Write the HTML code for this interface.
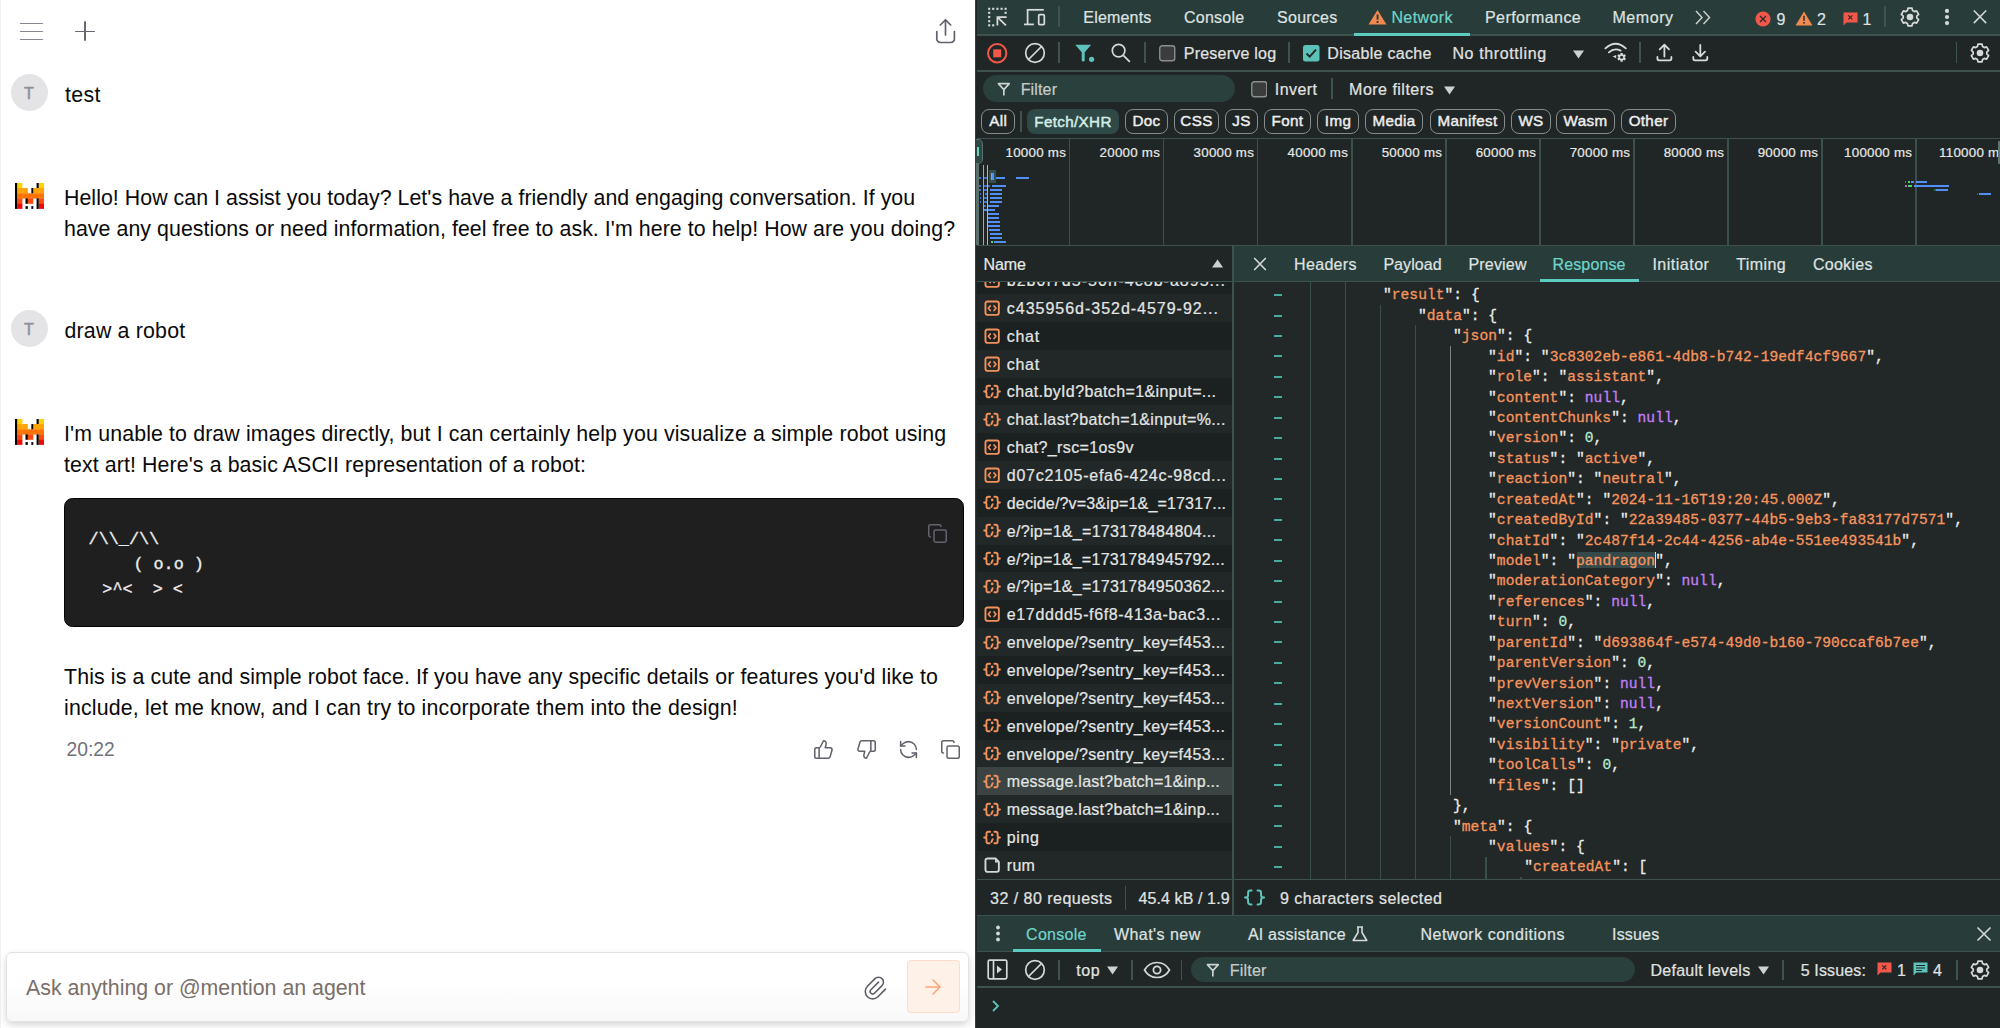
<!DOCTYPE html>
<html><head><meta charset="utf-8"><style>
html,body{margin:0;padding:0;width:2000px;height:1028px;overflow:hidden;background:#fff}
body{position:relative;font-family:"Liberation Sans",sans-serif}
.ab{position:absolute}
.t{white-space:pre}
.dk{-webkit-text-stroke:0.22px currentColor}
.j{white-space:pre;font-family:"Liberation Mono",monospace;font-size:14.58px;line-height:21px;letter-spacing:0.045px;-webkit-text-stroke:0.25px currentColor}
.j span{-webkit-text-stroke:0.3px}
</style></head><body>
<div class="ab" style="left:0;top:0;width:975px;height:1028px;background:#fff"></div>
<div class="ab" style="left:0;top:0;width:1px;height:1028px;background:#f1f1f1"></div>
<div class="ab" style="left:20.4px;top:22.7px;width:22.8px;height:1.7px;border-radius:1px;background:#858591"></div>
<div class="ab" style="left:20.4px;top:30.7px;width:22.8px;height:1.7px;border-radius:1px;background:#858591"></div>
<div class="ab" style="left:20.4px;top:38.7px;width:22.8px;height:1.7px;border-radius:1px;background:#858591"></div>
<div class="ab" style="left:74.7px;top:30.5px;width:20.4px;height:1.9px;border-radius:1px;background:#666671"></div>
<div class="ab" style="left:83.9px;top:21.2px;width:1.9px;height:20.3px;border-radius:1px;background:#666671"></div>
<svg class="ab" style="left:930px;top:14px" width="32" height="34" viewBox="0 0 32 34" fill="none" stroke="#62626e" stroke-width="1.7" stroke-linecap="round" stroke-linejoin="round"><path d="M15.5 6v15"/><path d="M10.3 11 15.5 5.8 20.7 11"/><path d="M6.8 17.5v7.5a3.5 3.5 0 0 0 3.5 3.5h10.6a3.5 3.5 0 0 0 3.5-3.5v-7.5"/></svg>
<div class="ab" style="left:10.8px;top:74.0px;width:37px;height:37px;border-radius:50%;background:#e4e4e7"></div>
<div class="ab t" style="left:10.5px;top:82.80px;line-height:21px;font-size:16px;color:#8f8f99;width:37px;text-align:center;-webkit-text-stroke:0.55px currentColor">T</div>
<div class="ab" style="left:10.8px;top:310.0px;width:37px;height:37px;border-radius:50%;background:#e4e4e7"></div>
<div class="ab t" style="left:10.5px;top:318.80px;line-height:21px;font-size:16px;color:#8f8f99;width:37px;text-align:center;-webkit-text-stroke:0.55px currentColor">T</div>
<div class="ab t" style="left:65px;top:78.50px;line-height:32px;font-size:21.33px;color:#0a0a0a;letter-spacing:0.35px">test</div>
<div class="ab t" style="left:64.5px;top:314.50px;line-height:32px;font-size:21.33px;color:#0a0a0a;letter-spacing:0.19px">draw a robot</div>
<svg class="ab" style="left:14.6px;top:183px" width="29.2" height="25.9" viewBox="0 0 29.2 25.9" shape-rendering="geometricPrecision"><rect x="2.15" y="0.00" width="5.25" height="5.31" fill="#ffd000"/><rect x="23.75" y="0.00" width="5.45" height="5.31" fill="#ffd000"/><rect x="2.15" y="5.06" width="5.25" height="5.49" fill="#ffa300"/><rect x="23.75" y="5.06" width="5.45" height="5.49" fill="#ffa300"/><rect x="2.15" y="10.30" width="5.25" height="5.30" fill="#ff7300"/><rect x="23.75" y="10.30" width="5.45" height="5.30" fill="#ff7300"/><rect x="2.15" y="15.35" width="5.25" height="5.70" fill="#fc4a10"/><rect x="23.75" y="15.35" width="5.45" height="5.70" fill="#fc4a10"/><rect x="2.15" y="20.80" width="5.25" height="5.10" fill="#ee0a05"/><rect x="23.75" y="20.80" width="5.45" height="5.10" fill="#ee0a05"/><rect x="7.20" y="5.06" width="5.65" height="5.49" fill="#ffa300"/><rect x="18.30" y="5.06" width="5.65" height="5.49" fill="#ffa300"/><rect x="7.20" y="10.30" width="16.75" height="5.30" fill="#ff7300"/><rect x="12.85" y="15.35" width="5.45" height="5.45" fill="#fc4a10"/><rect x="0.00" y="0.00" width="2.15" height="25.90" fill="#000"/><rect x="21.60" y="0.00" width="2.15" height="5.06" fill="#000"/><rect x="16.36" y="5.06" width="1.94" height="5.24" fill="#000"/><rect x="10.50" y="15.35" width="2.35" height="5.45" fill="#000"/><rect x="21.60" y="15.35" width="2.15" height="10.55" fill="#000"/><rect x="10.50" y="23.10" width="2.35" height="2.80" fill="#000"/><rect x="16.36" y="23.10" width="1.94" height="2.80" fill="#000"/></svg>
<svg class="ab" style="left:14.6px;top:419px" width="29.2" height="25.9" viewBox="0 0 29.2 25.9" shape-rendering="geometricPrecision"><rect x="2.15" y="0.00" width="5.25" height="5.31" fill="#ffd000"/><rect x="23.75" y="0.00" width="5.45" height="5.31" fill="#ffd000"/><rect x="2.15" y="5.06" width="5.25" height="5.49" fill="#ffa300"/><rect x="23.75" y="5.06" width="5.45" height="5.49" fill="#ffa300"/><rect x="2.15" y="10.30" width="5.25" height="5.30" fill="#ff7300"/><rect x="23.75" y="10.30" width="5.45" height="5.30" fill="#ff7300"/><rect x="2.15" y="15.35" width="5.25" height="5.70" fill="#fc4a10"/><rect x="23.75" y="15.35" width="5.45" height="5.70" fill="#fc4a10"/><rect x="2.15" y="20.80" width="5.25" height="5.10" fill="#ee0a05"/><rect x="23.75" y="20.80" width="5.45" height="5.10" fill="#ee0a05"/><rect x="7.20" y="5.06" width="5.65" height="5.49" fill="#ffa300"/><rect x="18.30" y="5.06" width="5.65" height="5.49" fill="#ffa300"/><rect x="7.20" y="10.30" width="16.75" height="5.30" fill="#ff7300"/><rect x="12.85" y="15.35" width="5.45" height="5.45" fill="#fc4a10"/><rect x="0.00" y="0.00" width="2.15" height="25.90" fill="#000"/><rect x="21.60" y="0.00" width="2.15" height="5.06" fill="#000"/><rect x="16.36" y="5.06" width="1.94" height="5.24" fill="#000"/><rect x="10.50" y="15.35" width="2.35" height="5.45" fill="#000"/><rect x="21.60" y="15.35" width="2.15" height="10.55" fill="#000"/><rect x="10.50" y="23.10" width="2.35" height="2.80" fill="#000"/><rect x="16.36" y="23.10" width="1.94" height="2.80" fill="#000"/></svg>
<div class="ab t" style="left:64px;top:181.50px;line-height:32px;font-size:21.33px;color:#0a0a0a;letter-spacing:0.046px">Hello! How can I assist you today? Let's have a friendly and engaging conversation. If you</div>
<div class="ab t" style="left:64px;top:213.00px;line-height:32px;font-size:21.33px;color:#0a0a0a;letter-spacing:0.065px">have any questions or need information, feel free to ask. I'm here to help! How are you doing?</div>
<div class="ab t" style="left:64px;top:417.50px;line-height:32px;font-size:21.33px;color:#0a0a0a;letter-spacing:0.127px">I'm unable to draw images directly, but I can certainly help you visualize a simple robot using</div>
<div class="ab t" style="left:64px;top:449.00px;line-height:32px;font-size:21.33px;color:#0a0a0a;letter-spacing:0.101px">text art! Here's a basic ASCII representation of a robot:</div>
<div class="ab" style="left:64px;top:498.4px;width:900px;height:129px;border-radius:8.5px;background:#1f1f1f;border:1.2px solid #050505;box-sizing:border-box"></div>
<div class="ab t" style="left:88.6px;top:526.50px;line-height:25px;font-size:16.8px;color:#ececec;font-family:'Liberation Mono',monospace;-webkit-text-stroke:0.35px currentColor">/\\_/\\</div>
<div class="ab t" style="left:93.1px;top:551.50px;line-height:25px;font-size:16.8px;color:#ececec;font-family:'Liberation Mono',monospace;-webkit-text-stroke:0.35px currentColor">    ( o.o )</div>
<div class="ab t" style="left:92.3px;top:577.00px;line-height:25px;font-size:16.8px;color:#ececec;font-family:'Liberation Mono',monospace;-webkit-text-stroke:0.35px currentColor"> &gt;^&lt;  &gt; &lt;</div>
<svg class="ab" style="left:926.8px;top:523px" width="21" height="21" viewBox="0 0 24 24" fill="none" stroke="#64646f" stroke-width="1.7" stroke-linecap="round" stroke-linejoin="round"><rect width="14" height="14" x="8" y="8" rx="2" ry="2"/><path d="M4 16c-1.1 0-2-.9-2-2V4c0-1.1.9-2 2-2h10c1.1 0 2 .9 2 2"/></svg>
<div class="ab t" style="left:64px;top:660.50px;line-height:32px;font-size:21.33px;color:#0a0a0a;letter-spacing:0.122px">This is a cute and simple robot face. If you have any specific details or features you'd like to</div>
<div class="ab t" style="left:64px;top:692.00px;line-height:32px;font-size:21.33px;color:#0a0a0a;letter-spacing:0.172px">include, let me know, and I can try to incorporate them into the design!</div>
<div class="ab t" style="left:66.5px;top:736.00px;line-height:28px;font-size:19.3px;color:#71717a;">20:22</div>
<svg class="ab" style="left:812.9px;top:739.1px" width="21" height="21" viewBox="0 0 24 24" fill="none" stroke="#62626e" stroke-width="1.75" stroke-linecap="round" stroke-linejoin="round"><path d="M7 10v12"/><path d="M15 5.88 14 10h5.83a2 2 0 0 1 1.92 2.56l-2.33 8A2 2 0 0 1 17.5 22H4a2 2 0 0 1-2-2v-8a2 2 0 0 1 2-2h2.76a2 2 0 0 0 1.79-1.11L12 2a3.13 3.13 0 0 1 3 3.88Z"/></svg>
<svg class="ab" style="left:855.5px;top:739.1px" width="21" height="21" viewBox="0 0 24 24" fill="none" stroke="#62626e" stroke-width="1.75" stroke-linecap="round" stroke-linejoin="round"><path d="M17 14V2"/><path d="M9 18.12 10 14H4.17a2 2 0 0 1-1.92-2.56l2.33-8A2 2 0 0 1 6.5 2H20a2 2 0 0 1 2 2v8a2 2 0 0 1-2 2h-2.76a2 2 0 0 0-1.79 1.11L12 22a3.13 3.13 0 0 1-3-3.88Z"/></svg>
<svg class="ab" style="left:898.0px;top:739.1px" width="21" height="21" viewBox="0 0 24 24" fill="none" stroke="#62626e" stroke-width="1.75" stroke-linecap="round" stroke-linejoin="round"><path d="M21 12a9 9 0 0 0-9-9 9.75 9.75 0 0 0-6.74 2.74L3 8"/><path d="M3 3v5h5"/><path d="M3 12a9 9 0 0 0 9 9 9.75 9.75 0 0 0 6.74-2.74L21 16"/><path d="M16 16h5v5"/></svg>
<svg class="ab" style="left:940.0px;top:739.1px" width="21" height="21" viewBox="0 0 24 24" fill="none" stroke="#62626e" stroke-width="1.75" stroke-linecap="round" stroke-linejoin="round"><rect width="14" height="14" x="8" y="8" rx="2" ry="2"/><path d="M4 16c-1.1 0-2-.9-2-2V4c0-1.1.9-2 2-2h10c1.1 0 2 .9 2 2"/></svg>
<div class="ab" style="left:5.5px;top:951.5px;width:963px;height:70px;border-radius:6px;border:1px solid #e2e2e2;box-sizing:border-box;background:linear-gradient(#fff 40%,#f8f8f8);box-shadow:0 3px 7px rgba(0,0,0,0.16)"></div>
<div class="ab t" style="left:26px;top:971.50px;line-height:32px;font-size:21.33px;color:#7a6f69;">Ask anything or @mention an agent</div>
<svg class="ab" style="left:861px;top:974px" width="28" height="28" viewBox="0 0 24 24" fill="none" stroke="#5c5c67" stroke-width="1.35" stroke-linecap="round" stroke-linejoin="round"><path d="M15 7l-6.5 6.5a1.5 1.5 0 0 0 3 3l6.5 -6.5a3 3 0 0 0 -6 -6l-6.5 6.5a4.5 4.5 0 0 0 9 9l6.5 -6.5"/></svg>
<div class="ab" style="left:907.3px;top:960.2px;width:52.3px;height:52.4px;border-radius:3.5px;border:1.2px solid #fcdcc6;box-sizing:border-box;background:#fef1e8"></div>
<svg class="ab" style="left:921.3px;top:975.3px" width="24" height="24" viewBox="0 0 24 24" fill="none" stroke="#fba477" stroke-width="1.45" stroke-linecap="round" stroke-linejoin="round"><path d="M5 12h14"/><path d="m12 5 7 7-7 7"/></svg>
<div class="ab" style="left:975px;top:0px;width:1025px;height:1028px;background:#202525;"></div>
<div class="ab" style="left:974.6px;top:0px;width:1.8px;height:1028px;background:#2c4340;"></div>
<div class="ab" style="left:976.7px;top:0px;width:1023.3px;height:34.5px;background:#283c3a;"></div>
<div class="ab" style="left:976.7px;top:34.3px;width:1023.3px;height:1.4px;background:#3b524f;"></div>
<svg class="ab" style="left:980px;top:2px;" width="80" height="30" viewBox="0 0 80 30"><rect x="8.15" y="5.75" width="2.1" height="2.1" fill="#d8dcda"/><rect x="12.15" y="5.75" width="2.1" height="2.1" fill="#d8dcda"/><rect x="16.35" y="5.75" width="2.1" height="2.1" fill="#d8dcda"/><rect x="20.55" y="5.75" width="2.1" height="2.1" fill="#d8dcda"/><rect x="24.55" y="5.75" width="2.1" height="2.1" fill="#d8dcda"/><rect x="8.15" y="9.75" width="2.1" height="2.1" fill="#d8dcda"/><rect x="8.15" y="13.95" width="2.1" height="2.1" fill="#d8dcda"/><rect x="8.15" y="18.15" width="2.1" height="2.1" fill="#d8dcda"/><rect x="8.15" y="22.25" width="2.1" height="2.1" fill="#d8dcda"/><rect x="12.15" y="22.25" width="2.1" height="2.1" fill="#d8dcda"/><rect x="24.55" y="9.75" width="2.1" height="2.1" fill="#d8dcda"/><g fill="none" stroke="#d8dcda" stroke-width="1.75"><path d="M17.4 23.6V15.1H26.6"/><path d="M18 15.7 25.9 23.4"/><path d="M47.6 7.8H63.8"/><path d="M47.6 7V22.3"/><path d="M44 22.4H53.9"/><rect x="58.7" y="12.7" width="5.6" height="9.8" rx="1"/></g></svg>
<div class="ab" style="left:1058.4px;top:6px;width:1.3px;height:21px;background:#3d5552;"></div>
<div class="ab t dk" style="letter-spacing:0.185px;left:1083.3px;top:7.40px;line-height:22px;font-size:16px;color:#dfe2e0;">Elements</div>
<div class="ab t dk" style="letter-spacing:0.216px;left:1184.1px;top:7.40px;line-height:22px;font-size:16px;color:#dfe2e0;">Console</div>
<div class="ab t dk" style="letter-spacing:0.233px;left:1277.1px;top:7.40px;line-height:22px;font-size:16px;color:#dfe2e0;">Sources</div>
<div class="ab t dk" style="letter-spacing:0.411px;left:1485px;top:7.40px;line-height:22px;font-size:16px;color:#dfe2e0;">Performance</div>
<div class="ab t dk" style="letter-spacing:0.544px;left:1612.5px;top:7.40px;line-height:22px;font-size:16px;color:#dfe2e0;">Memory</div>
<svg class="ab" style="left:1368px;top:9px;" width="19" height="16" viewBox="0 0 19 16"><path d="M9.5 1 18.5 15.5H0.5Z" fill="#f2894f"/><rect x="8.6" y="5.5" width="1.9" height="5.2" fill="#283c3a"/><rect x="8.6" y="12" width="1.9" height="1.9" fill="#283c3a"/></svg>
<div class="ab t dk" style="letter-spacing:0.419px;left:1391.4px;top:7.40px;line-height:22px;font-size:16px;color:#6fd5ca;">Network</div>
<div class="ab" style="left:1354px;top:32.5px;width:116px;height:3px;background:#5ccbc0;"></div>
<svg class="ab" style="left:1694px;top:9px;" width="19" height="17" viewBox="0 0 19 17"><path d="M2 2l6 6.5-6 6.5M9.5 2l6 6.5-6 6.5" fill="none" stroke="#c9cecb" stroke-width="1.5"/></svg>
<svg class="ab" style="left:1754.5px;top:10.5px;" width="16" height="16" viewBox="0 0 16 16"><circle cx="8" cy="8" r="7.6" fill="#f1584a"/><path d="M5 5l6 6M11 5l-6 6" stroke="#2a2a2a" stroke-width="1.3"/></svg>
<div class="ab t dk" style="left:1776.5px;top:8.60px;line-height:22px;font-size:16px;color:#dfe2e0;letter-spacing:0.35px;">9</div>
<svg class="ab" style="left:1795px;top:10.5px;" width="18" height="15" viewBox="0 0 18 15"><path d="M9 0.5 17.5 14.5H0.5Z" fill="#f2894f"/><rect x="8.2" y="4.8" width="1.6" height="5" fill="#283c3a"/><rect x="8.2" y="11" width="1.6" height="1.7" fill="#283c3a"/></svg>
<div class="ab t dk" style="left:1817px;top:8.60px;line-height:22px;font-size:16px;color:#dfe2e0;letter-spacing:0.35px;">2</div>
<svg class="ab" style="left:1842.5px;top:11.5px;" width="15" height="14" viewBox="0 0 15 14"><path d="M0.5 0.5h14v10h-11l-3 3Z" fill="#f1584a"/><path d="M5.3 3.3l4 4M9.3 3.3l-4 4" stroke="#2a2a2a" stroke-width="1.2"/></svg>
<div class="ab t dk" style="left:1862.5px;top:8.60px;line-height:22px;font-size:16px;color:#dfe2e0;letter-spacing:0.35px;">1</div>
<div class="ab" style="left:1884.4px;top:6px;width:1.3px;height:21px;background:#3d5552;"></div>
<svg class="ab" style="left:1900px;top:7px;" width="20" height="20" viewBox="0 0 20 20"><path d="M12.02 1.23 L7.98 1.23 L7.42 3.60 L5.75 4.56 L3.42 3.86 L1.39 7.37 L3.17 9.04 L3.17 10.96 L1.39 12.63 L3.42 16.14 L5.75 15.44 L7.42 16.40 L7.98 18.77 L12.02 18.77 L12.58 16.40 L14.25 15.44 L16.58 16.14 L18.61 12.63 L16.83 10.96 L16.83 9.04 L18.61 7.37 L16.58 3.86 L14.25 4.56 L12.58 3.60Z" fill="none" stroke="#d5d9d7" stroke-width="1.75" stroke-linejoin="round"/><circle cx="10" cy="10" r="3.3" fill="#d5d9d7"/></svg>
<svg class="ab" style="left:1944px;top:8px;" width="6" height="18" viewBox="0 0 6 18"><circle cx="3" cy="2.9" r="2.1" fill="#d5d9d7"/><circle cx="3" cy="9" r="2.1" fill="#d5d9d7"/><circle cx="3" cy="15.1" r="2.1" fill="#d5d9d7"/></svg>
<svg class="ab" style="left:1972px;top:9.2px;" width="16" height="16" viewBox="0 0 16 16"><path d="M1.8 1.5l12.4 12.6M14.2 1.5l-12.4 12.6" stroke="#d5d9d7" stroke-width="1.5"/></svg>
<div class="ab" style="left:976.7px;top:35.7px;width:1023.3px;height:35px;background:#202525;"></div>
<div class="ab" style="left:976.7px;top:70.4px;width:1023.3px;height:1.3px;background:#3b524f;"></div>
<svg class="ab" style="left:986px;top:42px;" width="22" height="22" viewBox="0 0 22 22"><circle cx="11.2" cy="11.3" r="9.2" fill="none" stroke="#f1584a" stroke-width="2"/><rect x="7.2" y="7.3" width="8" height="8" fill="#f1584a"/></svg>
<svg class="ab" style="left:1023.5px;top:42px;" width="22" height="22" viewBox="0 0 22 22"><circle cx="11" cy="11" r="9.3" fill="none" stroke="#d5d9d7" stroke-width="1.7"/><path d="M4.5 17.5l13-13" stroke="#d5d9d7" stroke-width="1.7"/></svg>
<div class="ab" style="left:1058.4px;top:42px;width:1.3px;height:21px;background:#3d5552;"></div>
<svg class="ab" style="left:1074px;top:44px;" width="22" height="20" viewBox="0 0 22 20"><path d="M1.2 0.8h16L10.7 8.3V16.4Q10.7 17.4 9.2 17.4Q7.7 17.4 7.7 16.4V8.3Z" fill="#5cc4bb"/><circle cx="17.6" cy="15.3" r="2.6" fill="#5cc4bb"/></svg>
<svg class="ab" style="left:1110px;top:42px;" width="22" height="22" viewBox="0 0 22 22"><circle cx="8.6" cy="8.6" r="6.3" fill="none" stroke="#d5d9d7" stroke-width="1.7"/><path d="M13.3 13.3l6.5 6.5" stroke="#d5d9d7" stroke-width="1.8"/></svg>
<div class="ab" style="left:1144.4px;top:42px;width:1.3px;height:21px;background:#3d5552;"></div>
<svg class="ab" style="left:1159px;top:45px;" width="16.5" height="16.5" viewBox="0 0 16.5 16.5"><rect x="0.75" y="0.75" width="15" height="15" rx="2.5" fill="#3b3d3d" stroke="#8c8f8e" stroke-width="1.4"/></svg>
<div class="ab t dk" style="letter-spacing:0.225px;left:1183.8px;top:43.40px;line-height:22px;font-size:16px;color:#e0e3e1;">Preserve log</div>
<div class="ab" style="left:1288.4px;top:42px;width:1.3px;height:21px;background:#3d5552;"></div>
<svg class="ab" style="left:1303px;top:45px;" width="16.5" height="16.5" viewBox="0 0 16.5 16.5"><rect x="0" y="0" width="16.5" height="16.5" rx="2.5" fill="#5bc2b8"/><path d="M3.5 8.5l3.2 3.2 6.3-7" fill="none" stroke="#262626" stroke-width="1.9"/></svg>
<div class="ab t dk" style="letter-spacing:0.292px;left:1327.3px;top:43.40px;line-height:22px;font-size:16px;color:#e0e3e1;">Disable cache</div>
<div class="ab t dk" style="letter-spacing:0.620px;left:1452.4px;top:43.40px;line-height:22px;font-size:16px;color:#e0e3e1;">No throttling</div>
<svg class="ab" style="left:1572.5px;top:49.5px;" width="11" height="9" viewBox="0 0 11 9"><path d="M0 0.5h11L5.5 8.5Z" fill="#cdd1cf"/></svg>
<svg class="ab" style="left:1600px;top:40px;" width="30" height="24" viewBox="0 0 30 24"><g fill="none" stroke="#d8dcda" stroke-width="1.8" stroke-linecap="round"><path d="M5.4 8.4Q15.6 -0.9 25.8 8.4"/><path d="M8.9 12.3Q14.2 7.6 20.6 10.6"/></g><path d="M16.2 15 12.6 16.6 16.2 18.2Z" fill="#d8dcda"/><path d="M22.69 12.93 L20.51 12.93 L20.34 14.47 L19.78 14.79 L18.36 14.17 L17.27 16.06 L18.52 16.98 L18.52 17.62 L17.27 18.54 L18.36 20.43 L19.78 19.81 L20.34 20.13 L20.51 21.67 L22.69 21.67 L22.86 20.13 L23.42 19.81 L24.84 20.43 L25.93 18.54 L24.68 17.62 L24.68 16.98 L25.93 16.06 L24.84 14.17 L23.42 14.79 L22.86 14.47Z" fill="#d8dcda"/><circle cx="21.6" cy="17.3" r="1.5" fill="#202525"/></svg>
<div class="ab" style="left:1639.4px;top:42px;width:1.3px;height:21px;background:#3d5552;"></div>
<svg class="ab" style="left:1655px;top:43px;" width="18" height="20" viewBox="0 0 18 20"><g fill="none" stroke="#d8dcda" stroke-width="1.8" stroke-linecap="round" stroke-linejoin="round"><path d="M9.4 13.6V1.8M4.7 6.3 9.4 1.6l4.6 4.7"/><path d="M2.4 14v1.6Q2.4 17.3 4.1 17.3H14.7Q16.4 17.3 16.4 15.6V14"/></g></svg>
<svg class="ab" style="left:1691px;top:43px;" width="18" height="20" viewBox="0 0 18 20"><g fill="none" stroke="#d8dcda" stroke-width="1.8" stroke-linecap="round" stroke-linejoin="round"><path d="M9.3 1.8V13.2M4.6 8.6 9.3 13.3l4.7-4.7"/><path d="M2.3 14v1.6Q2.3 17.3 4 17.3H14.6Q16.3 17.3 16.3 15.6V14"/></g></svg>
<div class="ab" style="left:1955.9px;top:42px;width:1.3px;height:21px;background:#3d5552;"></div>
<svg class="ab" style="left:1970px;top:43px;" width="20" height="20" viewBox="0 0 20 20"><path d="M12.02 1.23 L7.98 1.23 L7.42 3.60 L5.75 4.56 L3.42 3.86 L1.39 7.37 L3.17 9.04 L3.17 10.96 L1.39 12.63 L3.42 16.14 L5.75 15.44 L7.42 16.40 L7.98 18.77 L12.02 18.77 L12.58 16.40 L14.25 15.44 L16.58 16.14 L18.61 12.63 L16.83 10.96 L16.83 9.04 L18.61 7.37 L16.58 3.86 L14.25 4.56 L12.58 3.60Z" fill="none" stroke="#d5d9d7" stroke-width="1.75" stroke-linejoin="round"/><circle cx="10" cy="10" r="3.3" fill="#d5d9d7"/></svg>
<div class="ab" style="left:976.7px;top:71.7px;width:1023.3px;height:66px;background:#202525;"></div>
<div class="ab" style="left:982.8px;top:75.3px;width:252.2px;height:26.4px;background:#29403d;border-radius:14px"></div>
<svg class="ab" style="left:997px;top:81.5px;" width="14" height="14" viewBox="0 0 14 14"><path d="M1.4 1.6H12.3L6.85 7.6Z" fill="none" stroke="#cdd2cf" stroke-width="1.6" stroke-linejoin="round"/><path d="M6.85 7.4V13.4" stroke="#cdd2cf" stroke-width="1.7"/></svg>
<div class="ab t dk" style="letter-spacing:0.147px;left:1020.7px;top:78.60px;line-height:22px;font-size:16px;color:#c7ccca;">Filter</div>
<svg class="ab" style="left:1250.5px;top:81px;" width="16.5" height="16.5" viewBox="0 0 16.5 16.5"><rect x="0.75" y="0.75" width="15" height="15" rx="2.5" fill="#3b3d3d" stroke="#8c8f8e" stroke-width="1.4"/></svg>
<div class="ab t dk" style="letter-spacing:0.417px;left:1274.8px;top:79.10px;line-height:22px;font-size:16px;color:#e0e3e1;">Invert</div>
<div class="ab" style="left:1331.4px;top:78px;width:1.3px;height:21px;background:#3d5552;"></div>
<div class="ab t dk" style="letter-spacing:0.480px;left:1349.1px;top:79.10px;line-height:22px;font-size:16px;color:#e0e3e1;">More filters</div>
<svg class="ab" style="left:1443.5px;top:85.5px;" width="11" height="9" viewBox="0 0 11 9"><path d="M0 0.5h11L5.5 8.5Z" fill="#cdd1cf"/></svg>
<div class="ab t" style="left:981.4px;top:109.3px;width:33.60000000000002px;height:25px;box-sizing:border-box;border:1.7px solid #858c8a;border-radius:8px;color:#eceeed;font-size:15.2px;line-height:22.8px;text-align:center;letter-spacing:0.35px;-webkit-text-stroke:0.45px currentColor">All</div>
<div class="ab t" style="left:1027px;top:109.3px;width:92px;height:25px;border-radius:8px;background:#2f4946;color:#d3efe9;font-size:15.2px;line-height:26.2px;text-align:center;letter-spacing:0.35px;-webkit-text-stroke:0.45px currentColor">Fetch/XHR</div>
<div class="ab t" style="left:1125px;top:109.3px;width:43px;height:25px;box-sizing:border-box;border:1.7px solid #858c8a;border-radius:8px;color:#eceeed;font-size:15.2px;line-height:22.8px;text-align:center;letter-spacing:0.35px;-webkit-text-stroke:0.45px currentColor">Doc</div>
<div class="ab t" style="left:1174px;top:109.3px;width:45px;height:25px;box-sizing:border-box;border:1.7px solid #858c8a;border-radius:8px;color:#eceeed;font-size:15.2px;line-height:22.8px;text-align:center;letter-spacing:0.35px;-webkit-text-stroke:0.45px currentColor">CSS</div>
<div class="ab t" style="left:1225px;top:109.3px;width:33px;height:25px;box-sizing:border-box;border:1.7px solid #858c8a;border-radius:8px;color:#eceeed;font-size:15.2px;line-height:22.8px;text-align:center;letter-spacing:0.35px;-webkit-text-stroke:0.45px currentColor">JS</div>
<div class="ab t" style="left:1264px;top:109.3px;width:47px;height:25px;box-sizing:border-box;border:1.7px solid #858c8a;border-radius:8px;color:#eceeed;font-size:15.2px;line-height:22.8px;text-align:center;letter-spacing:0.35px;-webkit-text-stroke:0.45px currentColor">Font</div>
<div class="ab t" style="left:1317px;top:109.3px;width:42px;height:25px;box-sizing:border-box;border:1.7px solid #858c8a;border-radius:8px;color:#eceeed;font-size:15.2px;line-height:22.8px;text-align:center;letter-spacing:0.35px;-webkit-text-stroke:0.45px currentColor">Img</div>
<div class="ab t" style="left:1365px;top:109.3px;width:58px;height:25px;box-sizing:border-box;border:1.7px solid #858c8a;border-radius:8px;color:#eceeed;font-size:15.2px;line-height:22.8px;text-align:center;letter-spacing:0.35px;-webkit-text-stroke:0.45px currentColor">Media</div>
<div class="ab t" style="left:1430px;top:109.3px;width:75px;height:25px;box-sizing:border-box;border:1.7px solid #858c8a;border-radius:8px;color:#eceeed;font-size:15.2px;line-height:22.8px;text-align:center;letter-spacing:0.35px;-webkit-text-stroke:0.45px currentColor">Manifest</div>
<div class="ab t" style="left:1511px;top:109.3px;width:40px;height:25px;box-sizing:border-box;border:1.7px solid #858c8a;border-radius:8px;color:#eceeed;font-size:15.2px;line-height:22.8px;text-align:center;letter-spacing:0.35px;-webkit-text-stroke:0.45px currentColor">WS</div>
<div class="ab t" style="left:1556px;top:109.3px;width:59px;height:25px;box-sizing:border-box;border:1.7px solid #858c8a;border-radius:8px;color:#eceeed;font-size:15.2px;line-height:22.8px;text-align:center;letter-spacing:0.35px;-webkit-text-stroke:0.45px currentColor">Wasm</div>
<div class="ab t" style="left:1621px;top:109.3px;width:55px;height:25px;box-sizing:border-box;border:1.7px solid #858c8a;border-radius:8px;color:#eceeed;font-size:15.2px;line-height:22.8px;text-align:center;letter-spacing:0.35px;-webkit-text-stroke:0.45px currentColor">Other</div>
<div class="ab" style="left:1020.4px;top:111px;width:1.3px;height:21px;background:#3d5552;"></div>
<div class="ab" style="left:976.7px;top:137.6px;width:1023.3px;height:1.3px;background:#3b524f;"></div>
<div class="ab" style="left:976.7px;top:138.9px;width:1023.3px;height:106.4px;background:#202525;"></div>
<div class="ab" style="left:1069.1499999999999px;top:138.9px;width:1.3px;height:106.4px;background:#3a504c;"></div>
<div class="ab t" style="left:869.8px;top:142.4px;width:196.3px;text-align:right;line-height:22px;font-size:13.33px;color:#e6e9e7;letter-spacing:0.25px;-webkit-text-stroke:0.2px currentColor">10000 ms</div>
<div class="ab" style="left:1163.1699999999998px;top:138.9px;width:1.3px;height:106.4px;background:#3a504c;"></div>
<div class="ab t" style="left:963.8199999999999px;top:142.4px;width:196.3px;text-align:right;line-height:22px;font-size:13.33px;color:#e6e9e7;letter-spacing:0.25px;-webkit-text-stroke:0.2px currentColor">20000 ms</div>
<div class="ab" style="left:1257.1899999999998px;top:138.9px;width:1.3px;height:106.4px;background:#3a504c;"></div>
<div class="ab t" style="left:1057.84px;top:142.4px;width:196.3px;text-align:right;line-height:22px;font-size:13.33px;color:#e6e9e7;letter-spacing:0.25px;-webkit-text-stroke:0.2px currentColor">30000 ms</div>
<div class="ab" style="left:1351.2099999999998px;top:138.9px;width:1.3px;height:106.4px;background:#3a504c;"></div>
<div class="ab t" style="left:1151.86px;top:142.4px;width:196.3px;text-align:right;line-height:22px;font-size:13.33px;color:#e6e9e7;letter-spacing:0.25px;-webkit-text-stroke:0.2px currentColor">40000 ms</div>
<div class="ab" style="left:1445.2299999999998px;top:138.9px;width:1.3px;height:106.4px;background:#3a504c;"></div>
<div class="ab t" style="left:1245.8799999999999px;top:142.4px;width:196.3px;text-align:right;line-height:22px;font-size:13.33px;color:#e6e9e7;letter-spacing:0.25px;-webkit-text-stroke:0.2px currentColor">50000 ms</div>
<div class="ab" style="left:1539.2499999999998px;top:138.9px;width:1.3px;height:106.4px;background:#3a504c;"></div>
<div class="ab t" style="left:1339.8999999999999px;top:142.4px;width:196.3px;text-align:right;line-height:22px;font-size:13.33px;color:#e6e9e7;letter-spacing:0.25px;-webkit-text-stroke:0.2px currentColor">60000 ms</div>
<div class="ab" style="left:1633.27px;top:138.9px;width:1.3px;height:106.4px;background:#3a504c;"></div>
<div class="ab t" style="left:1433.92px;top:142.4px;width:196.3px;text-align:right;line-height:22px;font-size:13.33px;color:#e6e9e7;letter-spacing:0.25px;-webkit-text-stroke:0.2px currentColor">70000 ms</div>
<div class="ab" style="left:1727.29px;top:138.9px;width:1.3px;height:106.4px;background:#3a504c;"></div>
<div class="ab t" style="left:1527.94px;top:142.4px;width:196.3px;text-align:right;line-height:22px;font-size:13.33px;color:#e6e9e7;letter-spacing:0.25px;-webkit-text-stroke:0.2px currentColor">80000 ms</div>
<div class="ab" style="left:1821.31px;top:138.9px;width:1.3px;height:106.4px;background:#3a504c;"></div>
<div class="ab t" style="left:1621.96px;top:142.4px;width:196.3px;text-align:right;line-height:22px;font-size:13.33px;color:#e6e9e7;letter-spacing:0.25px;-webkit-text-stroke:0.2px currentColor">90000 ms</div>
<div class="ab" style="left:1915.33px;top:138.9px;width:1.3px;height:106.4px;background:#3a504c;"></div>
<div class="ab t" style="left:1715.98px;top:142.4px;width:196.3px;text-align:right;line-height:22px;font-size:13.33px;color:#e6e9e7;letter-spacing:0.25px;-webkit-text-stroke:0.2px currentColor">100000 ms</div>
<div class="ab t" style="left:1810.0px;top:142.4px;width:196.3px;text-align:right;line-height:22px;font-size:13.33px;color:#e6e9e7;letter-spacing:0.25px;-webkit-text-stroke:0.2px currentColor">110000 ms</div>
<div class="ab" style="left:976px;top:138.9px;width:3px;height:106.4px;background:#5a6f6c;"></div>
<div class="ab" style="left:976px;top:138.9px;width:6.8px;height:25.1px;background:#2f4845;border:1.5px solid #5a6f6c;border-left:none;border-radius:0 5px 5px 0;box-sizing:border-box"></div>
<div class="ab" style="left:977px;top:146.9px;width:2px;height:9.4px;background:#6fd0c4;"></div>
<div class="ab" style="left:1998.4px;top:141px;width:1.6px;height:22.5px;background:#5f7370;border-radius:1px 0 0 1px"></div>
<div class="ab" style="left:979.2px;top:176.75px;width:1.6999999999999318px;height:2.5px;background:#3f74c8;"></div>
<div class="ab" style="left:984.2px;top:176.75px;width:2.5px;height:2.5px;background:#3f74c8;"></div>
<div class="ab" style="left:996.3px;top:176.75px;width:9.200000000000045px;height:2.5px;background:#4f8ff7;"></div>
<div class="ab" style="left:1016px;top:176.75px;width:12.599999999999909px;height:2.5px;background:#4f8ff7;"></div>
<div class="ab" style="left:979.2px;top:184.75px;width:2.099999999999909px;height:2.5px;background:#3f74c8;"></div>
<div class="ab" style="left:984.2px;top:184.75px;width:6.2999999999999545px;height:2.5px;background:#3f74c8;"></div>
<div class="ab" style="left:992.2px;top:184.75px;width:13.799999999999955px;height:2.5px;background:#4f8ff7;"></div>
<div class="ab" style="left:979.2px;top:188.75px;width:1.6999999999999318px;height:2.5px;background:#3f74c8;"></div>
<div class="ab" style="left:984.2px;top:188.75px;width:2.5px;height:2.5px;background:#3f74c8;"></div>
<div class="ab" style="left:990px;top:188.75px;width:11.799999999999955px;height:2.5px;background:#4f8ff7;"></div>
<div class="ab" style="left:980px;top:192.75px;width:0.8999999999999773px;height:2.5px;background:#3f74c8;"></div>
<div class="ab" style="left:985px;top:192.75px;width:1.7000000000000455px;height:2.5px;background:#3f74c8;"></div>
<div class="ab" style="left:990px;top:192.75px;width:11.799999999999955px;height:2.5px;background:#4f8ff7;"></div>
<div class="ab" style="left:979.6px;top:196.75px;width:1.2999999999999545px;height:2.5px;background:#3f74c8;"></div>
<div class="ab" style="left:984.2px;top:196.75px;width:3.2999999999999545px;height:2.5px;background:#3f74c8;"></div>
<div class="ab" style="left:990px;top:196.75px;width:11.799999999999955px;height:2.5px;background:#4f8ff7;"></div>
<div class="ab" style="left:979.6px;top:200.75px;width:1.2999999999999545px;height:2.5px;background:#3f74c8;"></div>
<div class="ab" style="left:984.2px;top:200.75px;width:3.2999999999999545px;height:2.5px;background:#3f74c8;"></div>
<div class="ab" style="left:989.6px;top:200.75px;width:12.199999999999932px;height:2.5px;background:#4f8ff7;"></div>
<div class="ab" style="left:984.2px;top:204.75px;width:1.6999999999999318px;height:2.5px;background:#3f74c8;"></div>
<div class="ab" style="left:988.4px;top:204.75px;width:10.399999999999977px;height:2.5px;background:#4f8ff7;"></div>
<div class="ab" style="left:984.2px;top:208.75px;width:11.299999999999955px;height:2.5px;background:#4f8ff7;"></div>
<div class="ab" style="left:988.4px;top:212.75px;width:10.399999999999977px;height:2.5px;background:#4f8ff7;"></div>
<div class="ab" style="left:988.4px;top:216.75px;width:10.800000000000068px;height:2.5px;background:#4f8ff7;"></div>
<div class="ab" style="left:988.4px;top:220.75px;width:11.300000000000068px;height:2.5px;background:#4f8ff7;"></div>
<div class="ab" style="left:988.4px;top:224.75px;width:11.300000000000068px;height:2.5px;background:#4f8ff7;"></div>
<div class="ab" style="left:988.8px;top:228.75px;width:11.700000000000045px;height:2.5px;background:#4f8ff7;"></div>
<div class="ab" style="left:990px;top:232.75px;width:11.799999999999955px;height:2.5px;background:#4f8ff7;"></div>
<div class="ab" style="left:990px;top:236.75px;width:11.799999999999955px;height:2.5px;background:#4f8ff7;"></div>
<div class="ab" style="left:994.2px;top:240.75px;width:12.199999999999932px;height:2.5px;background:#4f8ff7;"></div>
<div class="ab" style="left:988.8px;top:170px;width:7.1px;height:12.6px;background:#34504c;"></div>
<div class="ab" style="left:990.9px;top:173px;width:1.4px;height:6.5px;background:#4cd964;"></div>
<div class="ab" style="left:992.3px;top:173px;width:1.5px;height:6.5px;background:#4f8ff7;"></div>
<div class="ab" style="left:990.9px;top:240.6px;width:2.1px;height:2.5px;background:#4cd964;"></div>
<div class="ab" style="left:982.6px;top:165px;width:1.8px;height:80px;background:#f2915a;"></div>
<div class="ab" style="left:986.7px;top:165px;width:1.5px;height:80px;background:#5fd3f2;"></div>
<div class="ab" style="left:1905px;top:180.8px;width:1.2999999999999545px;height:2.6px;background:#6b6f6e;"></div>
<div class="ab" style="left:1908px;top:180.8px;width:1.599999999999909px;height:2.6px;background:#4cd964;"></div>
<div class="ab" style="left:1911px;top:180.8px;width:2.599999999999909px;height:2.6px;background:#4f8ff7;"></div>
<div class="ab" style="left:1915.5px;top:180.8px;width:11.5px;height:2.6px;background:#4f8ff7;"></div>
<div class="ab" style="left:1905px;top:184.8px;width:1.5px;height:2.6px;background:#b070d0;"></div>
<div class="ab" style="left:1908px;top:184.8px;width:4px;height:2.6px;background:#4cd964;"></div>
<div class="ab" style="left:1913.7px;top:184.8px;width:35.299999999999955px;height:2.6px;background:#4f8ff7;"></div>
<div class="ab" style="left:1934px;top:188.8px;width:1.599999999999909px;height:2.6px;background:#2f6a3a;"></div>
<div class="ab" style="left:1936px;top:188.8px;width:12px;height:2.6px;background:#4f8ff7;"></div>
<div class="ab" style="left:1976.5px;top:192.8px;width:1.5px;height:2.6px;background:#2f6a3a;"></div>
<div class="ab" style="left:1979px;top:192.8px;width:11.799999999999955px;height:2.6px;background:#4f8ff7;"></div>
<div class="ab" style="left:976.7px;top:245px;width:1023.3px;height:1.7px;background:#3b524f;"></div>
<div class="ab" style="left:976.7px;top:246.3px;width:256px;height:35px;background:#202525;"></div>
<div class="ab" style="left:976.7px;top:280.6px;width:256px;height:1.3px;background:#3b524f;"></div>
<div class="ab t dk" style="letter-spacing:-0.062px;left:983.4px;top:254.10px;line-height:22px;font-size:16px;color:#e5e8e6;">Name</div>
<svg class="ab" style="left:1211.5px;top:259px;" width="11" height="9" viewBox="0 0 11 9"><path d="M0 8.5h11L5.5 0.5Z" fill="#cdd1cf"/></svg>
<div class="ab" style="left:1233.4px;top:246.3px;width:766.6px;height:35px;background:#283c3a;"></div>
<div class="ab" style="left:1233.4px;top:280.6px;width:766.6px;height:1.3px;background:#3b524f;"></div>
<svg class="ab" style="left:1252px;top:256px;" width="16" height="16" viewBox="0 0 16 16"><path d="M2.2 2l11.6 12M13.8 2l-11.6 12" stroke="#d5d9d7" stroke-width="1.6"/></svg>
<div class="ab t dk" style="letter-spacing:0.319px;left:1294.1px;top:254.10px;line-height:22px;font-size:16px;color:#dfe2e0;">Headers</div>
<div class="ab t dk" style="letter-spacing:0.062px;left:1383.4px;top:254.10px;line-height:22px;font-size:16px;color:#dfe2e0;">Payload</div>
<div class="ab t dk" style="letter-spacing:0.199px;left:1468.4px;top:254.10px;line-height:22px;font-size:16px;color:#dfe2e0;">Preview</div>
<div class="ab t dk" style="letter-spacing:0.504px;left:1652.4px;top:254.10px;line-height:22px;font-size:16px;color:#dfe2e0;">Initiator</div>
<div class="ab t dk" style="letter-spacing:0.396px;left:1736.2px;top:254.10px;line-height:22px;font-size:16px;color:#dfe2e0;">Timing</div>
<div class="ab t dk" style="letter-spacing:0.281px;left:1812.9px;top:254.10px;line-height:22px;font-size:16px;color:#dfe2e0;">Cookies</div>
<div class="ab t dk" style="letter-spacing:0.136px;left:1552.5px;top:254.10px;line-height:22px;font-size:16px;color:#6fd5ca;">Response</div>
<div class="ab" style="left:1540px;top:278.5px;width:99px;height:3px;background:#5ccbc0;"></div>
<div class="ab" style="left:976.7px;top:281.9px;width:255px;height:597px;overflow:hidden">
<div class="ab" style="left:0;top:-15.75px;width:255px;height:28.15px;background:#1b2020"></div>
<svg class="ab" style="left:7.2999999999999545px;top:-9.924999999999999px;" width="16.3" height="16.3" viewBox="0 0 16.3 16.3"><rect x="1.45" y="1.45" width="13.4" height="13.4" rx="2" fill="none" stroke="#f3915a" stroke-width="1.9"/><path d="M6.3 5.9 4.3 8.2 6.3 10.6M10 5.9 12 8.2 10 10.6" fill="none" stroke="#f3915a" stroke-width="1.6" stroke-linecap="round" stroke-linejoin="round"/></svg>
<div class="ab t dk" style="letter-spacing:1.018px;left:30.1px;top:-11.82px;line-height:22px;font-size:16px;color:#e3e6e4;white-space:nowrap">b2b0f7d5-50ff-4c8b-a895...</div>
<div class="ab" style="left:0;top:12.10px;width:255px;height:28.15px;background:#222828"></div>
<svg class="ab" style="left:7.2999999999999545px;top:17.925000000000026px;" width="16.3" height="16.3" viewBox="0 0 16.3 16.3"><rect x="1.45" y="1.45" width="13.4" height="13.4" rx="2" fill="none" stroke="#f3915a" stroke-width="1.9"/><path d="M6.3 5.9 4.3 8.2 6.3 10.6M10 5.9 12 8.2 10 10.6" fill="none" stroke="#f3915a" stroke-width="1.6" stroke-linecap="round" stroke-linejoin="round"/></svg>
<div class="ab t dk" style="letter-spacing:0.983px;left:30.1px;top:16.03px;line-height:22px;font-size:16px;color:#e3e6e4;white-space:nowrap">c435956d-352d-4579-92...</div>
<div class="ab" style="left:0;top:39.95px;width:255px;height:28.15px;background:#1b2020"></div>
<svg class="ab" style="left:7.2999999999999545px;top:45.77500000000004px;" width="16.3" height="16.3" viewBox="0 0 16.3 16.3"><rect x="1.45" y="1.45" width="13.4" height="13.4" rx="2" fill="none" stroke="#f3915a" stroke-width="1.9"/><path d="M6.3 5.9 4.3 8.2 6.3 10.6M10 5.9 12 8.2 10 10.6" fill="none" stroke="#f3915a" stroke-width="1.6" stroke-linecap="round" stroke-linejoin="round"/></svg>
<div class="ab t dk" style="letter-spacing:0.717px;left:30.1px;top:43.88px;line-height:22px;font-size:16px;color:#e3e6e4;white-space:nowrap">chat</div>
<div class="ab" style="left:0;top:67.80px;width:255px;height:28.15px;background:#222828"></div>
<svg class="ab" style="left:7.2999999999999545px;top:73.62500000000001px;" width="16.3" height="16.3" viewBox="0 0 16.3 16.3"><rect x="1.45" y="1.45" width="13.4" height="13.4" rx="2" fill="none" stroke="#f3915a" stroke-width="1.9"/><path d="M6.3 5.9 4.3 8.2 6.3 10.6M10 5.9 12 8.2 10 10.6" fill="none" stroke="#f3915a" stroke-width="1.6" stroke-linecap="round" stroke-linejoin="round"/></svg>
<div class="ab t dk" style="letter-spacing:0.717px;left:30.1px;top:71.73px;line-height:22px;font-size:16px;color:#e3e6e4;white-space:nowrap">chat</div>
<div class="ab" style="left:0;top:95.65px;width:255px;height:28.15px;background:#1b2020"></div>
<svg class="ab" style="left:5.2999999999999545px;top:101.07500000000003px;" width="20" height="17" viewBox="0 0 20 17"><g fill="none" stroke="#f3915a" stroke-width="1.9" stroke-linecap="round" stroke-linejoin="round"><path d="M8.1 2.75H6.4Q4.5 2.75 4.5 4.6V6.7Q4.5 8.5 2.15 8.5Q4.5 8.5 4.5 10.3V12.4Q4.5 14.25 6.4 14.25H7.7"/><path d="M12.4 2.75H13.7Q15.6 2.75 15.6 4.6V6.7Q15.6 8.5 17.95 8.5Q15.6 8.5 15.6 10.3V12.4Q15.6 14.25 13.7 14.25H12.4"/><path d="M10.7 10.2 9.4 13"/></g><circle cx="10.2" cy="5.9" r="1.3" fill="#f3915a"/></svg>
<div class="ab t dk" style="letter-spacing:0.382px;left:30.1px;top:99.58px;line-height:22px;font-size:16px;color:#e3e6e4;white-space:nowrap">chat.byId?batch=1&amp;input=...</div>
<div class="ab" style="left:0;top:123.50px;width:255px;height:28.15px;background:#222828"></div>
<svg class="ab" style="left:5.2999999999999545px;top:128.925px;" width="20" height="17" viewBox="0 0 20 17"><g fill="none" stroke="#f3915a" stroke-width="1.9" stroke-linecap="round" stroke-linejoin="round"><path d="M8.1 2.75H6.4Q4.5 2.75 4.5 4.6V6.7Q4.5 8.5 2.15 8.5Q4.5 8.5 4.5 10.3V12.4Q4.5 14.25 6.4 14.25H7.7"/><path d="M12.4 2.75H13.7Q15.6 2.75 15.6 4.6V6.7Q15.6 8.5 17.95 8.5Q15.6 8.5 15.6 10.3V12.4Q15.6 14.25 13.7 14.25H12.4"/><path d="M10.7 10.2 9.4 13"/></g><circle cx="10.2" cy="5.9" r="1.3" fill="#f3915a"/></svg>
<div class="ab t dk" style="letter-spacing:0.387px;left:30.1px;top:127.43px;line-height:22px;font-size:16px;color:#e3e6e4;white-space:nowrap">chat.last?batch=1&amp;input=%...</div>
<div class="ab" style="left:0;top:151.35px;width:255px;height:28.15px;background:#1b2020"></div>
<svg class="ab" style="left:7.2999999999999545px;top:157.17500000000004px;" width="16.3" height="16.3" viewBox="0 0 16.3 16.3"><rect x="1.45" y="1.45" width="13.4" height="13.4" rx="2" fill="none" stroke="#f3915a" stroke-width="1.9"/><path d="M6.3 5.9 4.3 8.2 6.3 10.6M10 5.9 12 8.2 10 10.6" fill="none" stroke="#f3915a" stroke-width="1.6" stroke-linecap="round" stroke-linejoin="round"/></svg>
<div class="ab t dk" style="letter-spacing:0.378px;left:30.1px;top:155.28px;line-height:22px;font-size:16px;color:#e3e6e4;white-space:nowrap">chat?_rsc=1os9v</div>
<div class="ab" style="left:0;top:179.20px;width:255px;height:28.15px;background:#222828"></div>
<svg class="ab" style="left:7.2999999999999545px;top:185.02500000000006px;" width="16.3" height="16.3" viewBox="0 0 16.3 16.3"><rect x="1.45" y="1.45" width="13.4" height="13.4" rx="2" fill="none" stroke="#f3915a" stroke-width="1.9"/><path d="M6.3 5.9 4.3 8.2 6.3 10.6M10 5.9 12 8.2 10 10.6" fill="none" stroke="#f3915a" stroke-width="1.6" stroke-linecap="round" stroke-linejoin="round"/></svg>
<div class="ab t dk" style="letter-spacing:0.762px;left:30.1px;top:183.13px;line-height:22px;font-size:16px;color:#e3e6e4;white-space:nowrap">d07c2105-efa6-424c-98cd...</div>
<div class="ab" style="left:0;top:207.05px;width:255px;height:28.15px;background:#1b2020"></div>
<svg class="ab" style="left:5.2999999999999545px;top:212.47500000000008px;" width="20" height="17" viewBox="0 0 20 17"><g fill="none" stroke="#f3915a" stroke-width="1.9" stroke-linecap="round" stroke-linejoin="round"><path d="M8.1 2.75H6.4Q4.5 2.75 4.5 4.6V6.7Q4.5 8.5 2.15 8.5Q4.5 8.5 4.5 10.3V12.4Q4.5 14.25 6.4 14.25H7.7"/><path d="M12.4 2.75H13.7Q15.6 2.75 15.6 4.6V6.7Q15.6 8.5 17.95 8.5Q15.6 8.5 15.6 10.3V12.4Q15.6 14.25 13.7 14.25H12.4"/><path d="M10.7 10.2 9.4 13"/></g><circle cx="10.2" cy="5.9" r="1.3" fill="#f3915a"/></svg>
<div class="ab t dk" style="letter-spacing:0.168px;left:30.1px;top:210.98px;line-height:22px;font-size:16px;color:#e3e6e4;white-space:nowrap">decide/?v=3&amp;ip=1&amp;_=17317...</div>
<div class="ab" style="left:0;top:234.90px;width:255px;height:28.15px;background:#222828"></div>
<svg class="ab" style="left:5.2999999999999545px;top:240.325px;" width="20" height="17" viewBox="0 0 20 17"><g fill="none" stroke="#f3915a" stroke-width="1.9" stroke-linecap="round" stroke-linejoin="round"><path d="M8.1 2.75H6.4Q4.5 2.75 4.5 4.6V6.7Q4.5 8.5 2.15 8.5Q4.5 8.5 4.5 10.3V12.4Q4.5 14.25 6.4 14.25H7.7"/><path d="M12.4 2.75H13.7Q15.6 2.75 15.6 4.6V6.7Q15.6 8.5 17.95 8.5Q15.6 8.5 15.6 10.3V12.4Q15.6 14.25 13.7 14.25H12.4"/><path d="M10.7 10.2 9.4 13"/></g><circle cx="10.2" cy="5.9" r="1.3" fill="#f3915a"/></svg>
<div class="ab t dk" style="letter-spacing:0.301px;left:30.1px;top:238.82px;line-height:22px;font-size:16px;color:#e3e6e4;white-space:nowrap">e/?ip=1&amp;_=173178484804...</div>
<div class="ab" style="left:0;top:262.75px;width:255px;height:28.15px;background:#1b2020"></div>
<svg class="ab" style="left:5.2999999999999545px;top:268.175px;" width="20" height="17" viewBox="0 0 20 17"><g fill="none" stroke="#f3915a" stroke-width="1.9" stroke-linecap="round" stroke-linejoin="round"><path d="M8.1 2.75H6.4Q4.5 2.75 4.5 4.6V6.7Q4.5 8.5 2.15 8.5Q4.5 8.5 4.5 10.3V12.4Q4.5 14.25 6.4 14.25H7.7"/><path d="M12.4 2.75H13.7Q15.6 2.75 15.6 4.6V6.7Q15.6 8.5 17.95 8.5Q15.6 8.5 15.6 10.3V12.4Q15.6 14.25 13.7 14.25H12.4"/><path d="M10.7 10.2 9.4 13"/></g><circle cx="10.2" cy="5.9" r="1.3" fill="#f3915a"/></svg>
<div class="ab t dk" style="letter-spacing:0.285px;left:30.1px;top:266.68px;line-height:22px;font-size:16px;color:#e3e6e4;white-space:nowrap">e/?ip=1&amp;_=1731784945792...</div>
<div class="ab" style="left:0;top:290.60px;width:255px;height:28.15px;background:#222828"></div>
<svg class="ab" style="left:5.2999999999999545px;top:296.02500000000003px;" width="20" height="17" viewBox="0 0 20 17"><g fill="none" stroke="#f3915a" stroke-width="1.9" stroke-linecap="round" stroke-linejoin="round"><path d="M8.1 2.75H6.4Q4.5 2.75 4.5 4.6V6.7Q4.5 8.5 2.15 8.5Q4.5 8.5 4.5 10.3V12.4Q4.5 14.25 6.4 14.25H7.7"/><path d="M12.4 2.75H13.7Q15.6 2.75 15.6 4.6V6.7Q15.6 8.5 17.95 8.5Q15.6 8.5 15.6 10.3V12.4Q15.6 14.25 13.7 14.25H12.4"/><path d="M10.7 10.2 9.4 13"/></g><circle cx="10.2" cy="5.9" r="1.3" fill="#f3915a"/></svg>
<div class="ab t dk" style="letter-spacing:0.289px;left:30.1px;top:294.53px;line-height:22px;font-size:16px;color:#e3e6e4;white-space:nowrap">e/?ip=1&amp;_=1731784950362...</div>
<div class="ab" style="left:0;top:318.45px;width:255px;height:28.15px;background:#1b2020"></div>
<svg class="ab" style="left:7.2999999999999545px;top:324.27500000000003px;" width="16.3" height="16.3" viewBox="0 0 16.3 16.3"><rect x="1.45" y="1.45" width="13.4" height="13.4" rx="2" fill="none" stroke="#f3915a" stroke-width="1.9"/><path d="M6.3 5.9 4.3 8.2 6.3 10.6M10 5.9 12 8.2 10 10.6" fill="none" stroke="#f3915a" stroke-width="1.6" stroke-linecap="round" stroke-linejoin="round"/></svg>
<div class="ab t dk" style="letter-spacing:0.645px;left:30.1px;top:322.38px;line-height:22px;font-size:16px;color:#e3e6e4;white-space:nowrap">e17dddd5-f6f8-413a-bac3...</div>
<div class="ab" style="left:0;top:346.30px;width:255px;height:28.15px;background:#222828"></div>
<svg class="ab" style="left:5.2999999999999545px;top:351.7250000000001px;" width="20" height="17" viewBox="0 0 20 17"><g fill="none" stroke="#f3915a" stroke-width="1.9" stroke-linecap="round" stroke-linejoin="round"><path d="M8.1 2.75H6.4Q4.5 2.75 4.5 4.6V6.7Q4.5 8.5 2.15 8.5Q4.5 8.5 4.5 10.3V12.4Q4.5 14.25 6.4 14.25H7.7"/><path d="M12.4 2.75H13.7Q15.6 2.75 15.6 4.6V6.7Q15.6 8.5 17.95 8.5Q15.6 8.5 15.6 10.3V12.4Q15.6 14.25 13.7 14.25H12.4"/><path d="M10.7 10.2 9.4 13"/></g><circle cx="10.2" cy="5.9" r="1.3" fill="#f3915a"/></svg>
<div class="ab t dk" style="letter-spacing:0.319px;left:30.1px;top:350.23px;line-height:22px;font-size:16px;color:#e3e6e4;white-space:nowrap">envelope/?sentry_key=f453...</div>
<div class="ab" style="left:0;top:374.15px;width:255px;height:28.15px;background:#1b2020"></div>
<svg class="ab" style="left:5.2999999999999545px;top:379.575px;" width="20" height="17" viewBox="0 0 20 17"><g fill="none" stroke="#f3915a" stroke-width="1.9" stroke-linecap="round" stroke-linejoin="round"><path d="M8.1 2.75H6.4Q4.5 2.75 4.5 4.6V6.7Q4.5 8.5 2.15 8.5Q4.5 8.5 4.5 10.3V12.4Q4.5 14.25 6.4 14.25H7.7"/><path d="M12.4 2.75H13.7Q15.6 2.75 15.6 4.6V6.7Q15.6 8.5 17.95 8.5Q15.6 8.5 15.6 10.3V12.4Q15.6 14.25 13.7 14.25H12.4"/><path d="M10.7 10.2 9.4 13"/></g><circle cx="10.2" cy="5.9" r="1.3" fill="#f3915a"/></svg>
<div class="ab t dk" style="letter-spacing:0.319px;left:30.1px;top:378.07px;line-height:22px;font-size:16px;color:#e3e6e4;white-space:nowrap">envelope/?sentry_key=f453...</div>
<div class="ab" style="left:0;top:402.00px;width:255px;height:28.15px;background:#222828"></div>
<svg class="ab" style="left:5.2999999999999545px;top:407.4250000000001px;" width="20" height="17" viewBox="0 0 20 17"><g fill="none" stroke="#f3915a" stroke-width="1.9" stroke-linecap="round" stroke-linejoin="round"><path d="M8.1 2.75H6.4Q4.5 2.75 4.5 4.6V6.7Q4.5 8.5 2.15 8.5Q4.5 8.5 4.5 10.3V12.4Q4.5 14.25 6.4 14.25H7.7"/><path d="M12.4 2.75H13.7Q15.6 2.75 15.6 4.6V6.7Q15.6 8.5 17.95 8.5Q15.6 8.5 15.6 10.3V12.4Q15.6 14.25 13.7 14.25H12.4"/><path d="M10.7 10.2 9.4 13"/></g><circle cx="10.2" cy="5.9" r="1.3" fill="#f3915a"/></svg>
<div class="ab t dk" style="letter-spacing:0.319px;left:30.1px;top:405.93px;line-height:22px;font-size:16px;color:#e3e6e4;white-space:nowrap">envelope/?sentry_key=f453...</div>
<div class="ab" style="left:0;top:429.85px;width:255px;height:28.15px;background:#1b2020"></div>
<svg class="ab" style="left:5.2999999999999545px;top:435.27500000000003px;" width="20" height="17" viewBox="0 0 20 17"><g fill="none" stroke="#f3915a" stroke-width="1.9" stroke-linecap="round" stroke-linejoin="round"><path d="M8.1 2.75H6.4Q4.5 2.75 4.5 4.6V6.7Q4.5 8.5 2.15 8.5Q4.5 8.5 4.5 10.3V12.4Q4.5 14.25 6.4 14.25H7.7"/><path d="M12.4 2.75H13.7Q15.6 2.75 15.6 4.6V6.7Q15.6 8.5 17.95 8.5Q15.6 8.5 15.6 10.3V12.4Q15.6 14.25 13.7 14.25H12.4"/><path d="M10.7 10.2 9.4 13"/></g><circle cx="10.2" cy="5.9" r="1.3" fill="#f3915a"/></svg>
<div class="ab t dk" style="letter-spacing:0.319px;left:30.1px;top:433.78px;line-height:22px;font-size:16px;color:#e3e6e4;white-space:nowrap">envelope/?sentry_key=f453...</div>
<div class="ab" style="left:0;top:457.70px;width:255px;height:28.15px;background:#222828"></div>
<svg class="ab" style="left:5.2999999999999545px;top:463.12500000000006px;" width="20" height="17" viewBox="0 0 20 17"><g fill="none" stroke="#f3915a" stroke-width="1.9" stroke-linecap="round" stroke-linejoin="round"><path d="M8.1 2.75H6.4Q4.5 2.75 4.5 4.6V6.7Q4.5 8.5 2.15 8.5Q4.5 8.5 4.5 10.3V12.4Q4.5 14.25 6.4 14.25H7.7"/><path d="M12.4 2.75H13.7Q15.6 2.75 15.6 4.6V6.7Q15.6 8.5 17.95 8.5Q15.6 8.5 15.6 10.3V12.4Q15.6 14.25 13.7 14.25H12.4"/><path d="M10.7 10.2 9.4 13"/></g><circle cx="10.2" cy="5.9" r="1.3" fill="#f3915a"/></svg>
<div class="ab t dk" style="letter-spacing:0.319px;left:30.1px;top:461.63px;line-height:22px;font-size:16px;color:#e3e6e4;white-space:nowrap">envelope/?sentry_key=f453...</div>
<div class="ab" style="left:0;top:485.55px;width:255px;height:28.15px;background:#3c4443"></div>
<svg class="ab" style="left:5.2999999999999545px;top:490.9750000000001px;" width="20" height="17" viewBox="0 0 20 17"><g fill="none" stroke="#f3915a" stroke-width="1.9" stroke-linecap="round" stroke-linejoin="round"><path d="M8.1 2.75H6.4Q4.5 2.75 4.5 4.6V6.7Q4.5 8.5 2.15 8.5Q4.5 8.5 4.5 10.3V12.4Q4.5 14.25 6.4 14.25H7.7"/><path d="M12.4 2.75H13.7Q15.6 2.75 15.6 4.6V6.7Q15.6 8.5 17.95 8.5Q15.6 8.5 15.6 10.3V12.4Q15.6 14.25 13.7 14.25H12.4"/><path d="M10.7 10.2 9.4 13"/></g><circle cx="10.2" cy="5.9" r="1.3" fill="#f3915a"/></svg>
<div class="ab t dk" style="letter-spacing:0.273px;left:30.1px;top:489.48px;line-height:22px;font-size:16px;color:#e3e6e4;white-space:nowrap">message.last?batch=1&amp;inp...</div>
<div class="ab" style="left:0;top:513.40px;width:255px;height:28.15px;background:#222828"></div>
<svg class="ab" style="left:5.2999999999999545px;top:518.8249999999999px;" width="20" height="17" viewBox="0 0 20 17"><g fill="none" stroke="#f3915a" stroke-width="1.9" stroke-linecap="round" stroke-linejoin="round"><path d="M8.1 2.75H6.4Q4.5 2.75 4.5 4.6V6.7Q4.5 8.5 2.15 8.5Q4.5 8.5 4.5 10.3V12.4Q4.5 14.25 6.4 14.25H7.7"/><path d="M12.4 2.75H13.7Q15.6 2.75 15.6 4.6V6.7Q15.6 8.5 17.95 8.5Q15.6 8.5 15.6 10.3V12.4Q15.6 14.25 13.7 14.25H12.4"/><path d="M10.7 10.2 9.4 13"/></g><circle cx="10.2" cy="5.9" r="1.3" fill="#f3915a"/></svg>
<div class="ab t dk" style="letter-spacing:0.273px;left:30.1px;top:517.32px;line-height:22px;font-size:16px;color:#e3e6e4;white-space:nowrap">message.last?batch=1&amp;inp...</div>
<div class="ab" style="left:0;top:541.25px;width:255px;height:28.15px;background:#1b2020"></div>
<svg class="ab" style="left:5.2999999999999545px;top:546.675px;" width="20" height="17" viewBox="0 0 20 17"><g fill="none" stroke="#f3915a" stroke-width="1.9" stroke-linecap="round" stroke-linejoin="round"><path d="M8.1 2.75H6.4Q4.5 2.75 4.5 4.6V6.7Q4.5 8.5 2.15 8.5Q4.5 8.5 4.5 10.3V12.4Q4.5 14.25 6.4 14.25H7.7"/><path d="M12.4 2.75H13.7Q15.6 2.75 15.6 4.6V6.7Q15.6 8.5 17.95 8.5Q15.6 8.5 15.6 10.3V12.4Q15.6 14.25 13.7 14.25H12.4"/><path d="M10.7 10.2 9.4 13"/></g><circle cx="10.2" cy="5.9" r="1.3" fill="#f3915a"/></svg>
<div class="ab t dk" style="letter-spacing:0.583px;left:30.1px;top:545.17px;line-height:22px;font-size:16px;color:#e3e6e4;white-space:nowrap">ping</div>
<div class="ab" style="left:0;top:569.10px;width:255px;height:28.15px;background:#222828"></div>
<svg class="ab" style="left:7.2999999999999545px;top:574.925px;" width="16.3" height="16.3" viewBox="0 0 16.3 16.3"><path d="M3.4 1.45h8.2l3.25 3.4v8A2 2 0 0 1 12.85 14.85H3.45A2 2 0 0 1 1.45 12.85V3.45A2 2 0 0 1 3.45 1.45Z" fill="none" stroke="#d3d8d6" stroke-width="1.9" stroke-linejoin="round"/><path d="M11 1.6v4h3.6Z" fill="#d3d8d6"/></svg>
<div class="ab t dk" style="letter-spacing:0.269px;left:30.1px;top:573.02px;line-height:22px;font-size:16px;color:#e3e6e4;white-space:nowrap">rum</div>
</div>
<div class="ab" style="left:1231.9px;top:245px;width:1.8px;height:634.5px;background:#3b5350;"></div>
<div class="ab" style="left:1233.7px;top:281.9px;width:766.3px;height:597.3px;background:#222727;"></div>
<div class="ab" style="left:1233.7px;top:281.9px;width:766.3px;height:597.3px;overflow:hidden">
<div class="ab" style="left:76.10px;top:0.10px;width:1.3px;height:598.00px;background:#3a4f4c"></div>
<div class="ab" style="left:111.10px;top:0.10px;width:1.3px;height:598.00px;background:#3a4f4c"></div>
<div class="ab" style="left:146.20px;top:23.10px;width:1.3px;height:575.00px;background:#3a4f4c"></div>
<div class="ab" style="left:181.30px;top:43.30px;width:1.3px;height:554.80px;background:#3a4f4c"></div>
<div class="ab" style="left:216.40px;top:63.90px;width:1.3px;height:449.20px;background:#7d8281"></div>
<div class="ab" style="left:216.50px;top:554.50px;width:1.3px;height:43.60px;background:#3a4f4c"></div>
<div class="ab" style="left:251.70px;top:574.70px;width:1.3px;height:23.40px;background:#3a4f4c"></div>
<div class="ab" style="left:286.80px;top:594.80px;width:1.3px;height:3.30px;background:#3a4f4c"></div>
<div class="ab" style="left:342.90px;top:269.70px;width:78.4px;height:16.5px;background:#34494a"></div>
<div class="ab" style="left:40.50px;top:12.10px;width:7.8px;height:2px;background:#4aa9a0"></div>
<div class="ab j" style="left:149.30px;top:3.50px"><span style="color:#eceeed">"</span><span style="color:#f6955e">result</span><span style="color:#eceeed">"</span><span style="color:#eceeed">: {</span></div>
<div class="ab" style="left:40.50px;top:33.10px;width:7.8px;height:2px;background:#4aa9a0"></div>
<div class="ab j" style="left:184.32px;top:23.93px"><span style="color:#eceeed">"</span><span style="color:#f6955e">data</span><span style="color:#eceeed">"</span><span style="color:#eceeed">: {</span></div>
<div class="ab" style="left:40.50px;top:53.10px;width:7.8px;height:2px;background:#4aa9a0"></div>
<div class="ab j" style="left:219.34px;top:44.36px"><span style="color:#eceeed">"</span><span style="color:#f6955e">json</span><span style="color:#eceeed">"</span><span style="color:#eceeed">: {</span></div>
<div class="ab" style="left:40.50px;top:73.10px;width:7.8px;height:2px;background:#4aa9a0"></div>
<div class="ab j" style="left:254.36px;top:64.79px"><span style="color:#eceeed">"</span><span style="color:#f6955e">id</span><span style="color:#eceeed">"</span><span style="color:#eceeed">: </span><span style="color:#eceeed">"</span><span style="color:#f6955e">3c8302eb-e861-4db8-b742-19edf4cf9667</span><span style="color:#eceeed">"</span><span style="color:#eceeed">,</span></div>
<div class="ab" style="left:40.50px;top:94.10px;width:7.8px;height:2px;background:#4aa9a0"></div>
<div class="ab j" style="left:254.36px;top:85.22px"><span style="color:#eceeed">"</span><span style="color:#f6955e">role</span><span style="color:#eceeed">"</span><span style="color:#eceeed">: </span><span style="color:#eceeed">"</span><span style="color:#f6955e">assistant</span><span style="color:#eceeed">"</span><span style="color:#eceeed">,</span></div>
<div class="ab" style="left:40.50px;top:114.10px;width:7.8px;height:2px;background:#4aa9a0"></div>
<div class="ab j" style="left:254.36px;top:105.65px"><span style="color:#eceeed">"</span><span style="color:#f6955e">content</span><span style="color:#eceeed">"</span><span style="color:#eceeed">: </span><span style="color:#c07ff7">null</span><span style="color:#eceeed">,</span></div>
<div class="ab" style="left:40.50px;top:135.10px;width:7.8px;height:2px;background:#4aa9a0"></div>
<div class="ab j" style="left:254.36px;top:126.08px"><span style="color:#eceeed">"</span><span style="color:#f6955e">contentChunks</span><span style="color:#eceeed">"</span><span style="color:#eceeed">: </span><span style="color:#c07ff7">null</span><span style="color:#eceeed">,</span></div>
<div class="ab" style="left:40.50px;top:155.10px;width:7.8px;height:2px;background:#4aa9a0"></div>
<div class="ab j" style="left:254.36px;top:146.51px"><span style="color:#eceeed">"</span><span style="color:#f6955e">version</span><span style="color:#eceeed">"</span><span style="color:#eceeed">: </span><span style="color:#b6ebcf">0</span><span style="color:#eceeed">,</span></div>
<div class="ab" style="left:40.50px;top:176.10px;width:7.8px;height:2px;background:#4aa9a0"></div>
<div class="ab j" style="left:254.36px;top:166.94px"><span style="color:#eceeed">"</span><span style="color:#f6955e">status</span><span style="color:#eceeed">"</span><span style="color:#eceeed">: </span><span style="color:#eceeed">"</span><span style="color:#f6955e">active</span><span style="color:#eceeed">"</span><span style="color:#eceeed">,</span></div>
<div class="ab" style="left:40.50px;top:196.10px;width:7.8px;height:2px;background:#4aa9a0"></div>
<div class="ab j" style="left:254.36px;top:187.37px"><span style="color:#eceeed">"</span><span style="color:#f6955e">reaction</span><span style="color:#eceeed">"</span><span style="color:#eceeed">: </span><span style="color:#eceeed">"</span><span style="color:#f6955e">neutral</span><span style="color:#eceeed">"</span><span style="color:#eceeed">,</span></div>
<div class="ab" style="left:40.50px;top:216.10px;width:7.8px;height:2px;background:#4aa9a0"></div>
<div class="ab j" style="left:254.36px;top:207.80px"><span style="color:#eceeed">"</span><span style="color:#f6955e">createdAt</span><span style="color:#eceeed">"</span><span style="color:#eceeed">: </span><span style="color:#eceeed">"</span><span style="color:#f6955e">2024-11-16T19:20:45.000Z</span><span style="color:#eceeed">"</span><span style="color:#eceeed">,</span></div>
<div class="ab" style="left:40.50px;top:237.10px;width:7.8px;height:2px;background:#4aa9a0"></div>
<div class="ab j" style="left:254.36px;top:228.23px"><span style="color:#eceeed">"</span><span style="color:#f6955e">createdById</span><span style="color:#eceeed">"</span><span style="color:#eceeed">: </span><span style="color:#eceeed">"</span><span style="color:#f6955e">22a39485-0377-44b5-9eb3-fa83177d7571</span><span style="color:#eceeed">"</span><span style="color:#eceeed">,</span></div>
<div class="ab" style="left:40.50px;top:257.10px;width:7.8px;height:2px;background:#4aa9a0"></div>
<div class="ab j" style="left:254.36px;top:248.66px"><span style="color:#eceeed">"</span><span style="color:#f6955e">chatId</span><span style="color:#eceeed">"</span><span style="color:#eceeed">: </span><span style="color:#eceeed">"</span><span style="color:#f6955e">2c487f14-2c44-4256-ab4e-551ee493541b</span><span style="color:#eceeed">"</span><span style="color:#eceeed">,</span></div>
<div class="ab" style="left:40.50px;top:278.10px;width:7.8px;height:2px;background:#4aa9a0"></div>
<div class="ab j" style="left:254.36px;top:269.09px"><span style="color:#eceeed">"</span><span style="color:#f6955e">model</span><span style="color:#eceeed">"</span><span style="color:#eceeed">: </span><span style="color:#eceeed">"</span><span style="color:#f6955e">pandragon</span><span style="color:#eceeed">"</span><span style="color:#eceeed">,</span></div>
<div class="ab" style="left:40.50px;top:298.10px;width:7.8px;height:2px;background:#4aa9a0"></div>
<div class="ab j" style="left:254.36px;top:289.52px"><span style="color:#eceeed">"</span><span style="color:#f6955e">moderationCategory</span><span style="color:#eceeed">"</span><span style="color:#eceeed">: </span><span style="color:#c07ff7">null</span><span style="color:#eceeed">,</span></div>
<div class="ab" style="left:40.50px;top:319.10px;width:7.8px;height:2px;background:#4aa9a0"></div>
<div class="ab j" style="left:254.36px;top:309.95px"><span style="color:#eceeed">"</span><span style="color:#f6955e">references</span><span style="color:#eceeed">"</span><span style="color:#eceeed">: </span><span style="color:#c07ff7">null</span><span style="color:#eceeed">,</span></div>
<div class="ab" style="left:40.50px;top:339.10px;width:7.8px;height:2px;background:#4aa9a0"></div>
<div class="ab j" style="left:254.36px;top:330.38px"><span style="color:#eceeed">"</span><span style="color:#f6955e">turn</span><span style="color:#eceeed">"</span><span style="color:#eceeed">: </span><span style="color:#b6ebcf">0</span><span style="color:#eceeed">,</span></div>
<div class="ab" style="left:40.50px;top:359.10px;width:7.8px;height:2px;background:#4aa9a0"></div>
<div class="ab j" style="left:254.36px;top:350.81px"><span style="color:#eceeed">"</span><span style="color:#f6955e">parentId</span><span style="color:#eceeed">"</span><span style="color:#eceeed">: </span><span style="color:#eceeed">"</span><span style="color:#f6955e">d693864f-e574-49d0-b160-790ccaf6b7ee</span><span style="color:#eceeed">"</span><span style="color:#eceeed">,</span></div>
<div class="ab" style="left:40.50px;top:380.10px;width:7.8px;height:2px;background:#4aa9a0"></div>
<div class="ab j" style="left:254.36px;top:371.24px"><span style="color:#eceeed">"</span><span style="color:#f6955e">parentVersion</span><span style="color:#eceeed">"</span><span style="color:#eceeed">: </span><span style="color:#b6ebcf">0</span><span style="color:#eceeed">,</span></div>
<div class="ab" style="left:40.50px;top:400.10px;width:7.8px;height:2px;background:#4aa9a0"></div>
<div class="ab j" style="left:254.36px;top:391.67px"><span style="color:#eceeed">"</span><span style="color:#f6955e">prevVersion</span><span style="color:#eceeed">"</span><span style="color:#eceeed">: </span><span style="color:#c07ff7">null</span><span style="color:#eceeed">,</span></div>
<div class="ab" style="left:40.50px;top:421.10px;width:7.8px;height:2px;background:#4aa9a0"></div>
<div class="ab j" style="left:254.36px;top:412.10px"><span style="color:#eceeed">"</span><span style="color:#f6955e">nextVersion</span><span style="color:#eceeed">"</span><span style="color:#eceeed">: </span><span style="color:#c07ff7">null</span><span style="color:#eceeed">,</span></div>
<div class="ab" style="left:40.50px;top:441.10px;width:7.8px;height:2px;background:#4aa9a0"></div>
<div class="ab j" style="left:254.36px;top:432.53px"><span style="color:#eceeed">"</span><span style="color:#f6955e">versionCount</span><span style="color:#eceeed">"</span><span style="color:#eceeed">: </span><span style="color:#b6ebcf">1</span><span style="color:#eceeed">,</span></div>
<div class="ab" style="left:40.50px;top:462.10px;width:7.8px;height:2px;background:#4aa9a0"></div>
<div class="ab j" style="left:254.36px;top:452.96px"><span style="color:#eceeed">"</span><span style="color:#f6955e">visibility</span><span style="color:#eceeed">"</span><span style="color:#eceeed">: </span><span style="color:#eceeed">"</span><span style="color:#f6955e">private</span><span style="color:#eceeed">"</span><span style="color:#eceeed">,</span></div>
<div class="ab" style="left:40.50px;top:482.10px;width:7.8px;height:2px;background:#4aa9a0"></div>
<div class="ab j" style="left:254.36px;top:473.39px"><span style="color:#eceeed">"</span><span style="color:#f6955e">toolCalls</span><span style="color:#eceeed">"</span><span style="color:#eceeed">: </span><span style="color:#b6ebcf">0</span><span style="color:#eceeed">,</span></div>
<div class="ab" style="left:40.50px;top:502.10px;width:7.8px;height:2px;background:#4aa9a0"></div>
<div class="ab j" style="left:254.36px;top:493.82px"><span style="color:#eceeed">"</span><span style="color:#f6955e">files</span><span style="color:#eceeed">"</span><span style="color:#eceeed">: []</span></div>
<div class="ab" style="left:40.50px;top:523.10px;width:7.8px;height:2px;background:#4aa9a0"></div>
<div class="ab j" style="left:219.34px;top:514.25px"><span style="color:#eceeed">},</span></div>
<div class="ab" style="left:40.50px;top:543.10px;width:7.8px;height:2px;background:#4aa9a0"></div>
<div class="ab j" style="left:219.34px;top:534.68px"><span style="color:#eceeed">"</span><span style="color:#f6955e">meta</span><span style="color:#eceeed">"</span><span style="color:#eceeed">: {</span></div>
<div class="ab" style="left:40.50px;top:564.10px;width:7.8px;height:2px;background:#4aa9a0"></div>
<div class="ab j" style="left:254.36px;top:555.11px"><span style="color:#eceeed">"</span><span style="color:#f6955e">values</span><span style="color:#eceeed">"</span><span style="color:#eceeed">: {</span></div>
<div class="ab" style="left:40.50px;top:584.10px;width:7.8px;height:2px;background:#4aa9a0"></div>
<div class="ab j" style="left:290.50px;top:575.54px"><span style="color:#eceeed">"</span><span style="color:#f6955e">createdAt</span><span style="color:#eceeed">"</span><span style="color:#eceeed">: [</span></div>
<div class="ab" style="left:421.30px;top:269.70px;width:1.5px;height:16.5px;background:#d8dcda"></div>
</div>
<div class="ab" style="left:976.7px;top:879px;width:1023.3px;height:1.4px;background:#3b524f;"></div>
<div class="ab" style="left:976.7px;top:880.4px;width:1023.3px;height:35px;background:#202525;"></div>
<div class="ab t dk" style="letter-spacing:0.477px;left:990.1px;top:888.10px;line-height:22px;font-size:16px;color:#e0e3e1;">32 / 80 requests</div>
<div class="ab" style="left:1124.9px;top:886px;width:1.3px;height:24px;background:#3d5552;"></div>
<div class="ab t dk" style="letter-spacing:0.113px;left:1138.4px;top:888.10px;line-height:22px;font-size:16px;color:#e0e3e1;">45.4 kB / 1.9</div>
<div class="ab" style="left:1232.2px;top:880.4px;width:1.4px;height:35px;background:#3b524f;"></div>
<svg class="ab" style="left:1243px;top:889px;" width="24" height="18" viewBox="0 0 24 18"><g fill="none" stroke="#5cc4bb" stroke-width="2" stroke-linecap="round" stroke-linejoin="round"><path d="M8.6 1.6H7.4Q5.1 1.6 5.1 3.9V6.2Q5.1 8.5 2 8.5Q5.1 8.5 5.1 10.8V13.1Q5.1 15.4 7.4 15.4H8.6"/><path d="M14.55 1.6H15.75Q18.05 1.6 18.05 3.9V6.2Q18.05 8.5 21.15 8.5Q18.05 8.5 18.05 10.8V13.1Q18.05 15.4 15.75 15.4H14.55"/></g></svg>
<div class="ab t dk" style="letter-spacing:0.496px;left:1280px;top:888.10px;line-height:22px;font-size:16px;color:#e0e3e1;">9 characters selected</div>
<div class="ab" style="left:976.7px;top:915px;width:1023.3px;height:1.4px;background:#3b524f;"></div>
<div class="ab" style="left:976.7px;top:916.4px;width:1023.3px;height:35px;background:#283c3a;"></div>
<div class="ab" style="left:976.7px;top:951px;width:1023.3px;height:1.4px;background:#3b524f;"></div>
<svg class="ab" style="left:993.5px;top:925px;" width="8" height="17" viewBox="0 0 8 17"><circle cx="4" cy="2.5" r="1.9" fill="#d5d9d7"/><circle cx="4" cy="8.5" r="1.9" fill="#d5d9d7"/><circle cx="4" cy="14.5" r="1.9" fill="#d5d9d7"/></svg>
<div class="ab t dk" style="letter-spacing:0.266px;left:1026.1px;top:924.10px;line-height:22px;font-size:16px;color:#6fd5ca;">Console</div>
<div class="ab" style="left:1013px;top:949px;width:87.8px;height:3px;background:#5ccbc0;"></div>
<div class="ab t dk" style="letter-spacing:0.466px;left:1113.9px;top:924.10px;line-height:22px;font-size:16px;color:#dfe2e0;">What's new</div>
<div class="ab t dk" style="letter-spacing:0.220px;left:1247.9px;top:924.10px;line-height:22px;font-size:16px;color:#dfe2e0;">AI assistance</div>
<div class="ab t dk" style="letter-spacing:0.519px;left:1420.4px;top:924.10px;line-height:22px;font-size:16px;color:#dfe2e0;">Network conditions</div>
<div class="ab t dk" style="letter-spacing:0.190px;left:1612px;top:924.10px;line-height:22px;font-size:16px;color:#dfe2e0;">Issues</div>
<svg class="ab" style="left:1351px;top:924.5px;" width="18" height="18" viewBox="0 0 18 18"><path d="M6 2h6M7 2v5.5L2.2 15.5h13.6L11 7.5V2" fill="none" stroke="#d5d9d7" stroke-width="1.6" stroke-linejoin="round"/></svg>
<svg class="ab" style="left:1976px;top:926px;" width="16" height="16" viewBox="0 0 16 16"><path d="M1.5 1.5l13 13M14.5 1.5l-13 13" stroke="#d5d9d7" stroke-width="1.6"/></svg>
<div class="ab" style="left:976.7px;top:952.4px;width:1023.3px;height:34.4px;background:#202525;"></div>
<div class="ab" style="left:976.7px;top:986.3px;width:1023.3px;height:1.4px;background:#3b524f;"></div>
<svg class="ab" style="left:987px;top:959px;" width="21" height="21" viewBox="0 0 21 21"><rect x="1.2" y="1.2" width="18.6" height="18.6" rx="1.5" fill="none" stroke="#d5d9d7" stroke-width="1.7"/><path d="M6.5 1.5v18" stroke="#d5d9d7" stroke-width="1.7"/><path d="M10 6.5l5 4-5 4Z" fill="#d5d9d7"/></svg>
<svg class="ab" style="left:1023.5px;top:959px;" width="22" height="22" viewBox="0 0 22 22"><circle cx="11" cy="11" r="9.3" fill="none" stroke="#d5d9d7" stroke-width="1.7"/><path d="M4.5 17.5l13-13" stroke="#d5d9d7" stroke-width="1.7"/></svg>
<div class="ab" style="left:1058.4px;top:960px;width:1.3px;height:20px;background:#3d5552;"></div>
<div class="ab t dk" style="letter-spacing:0.575px;left:1076.2px;top:960.10px;line-height:22px;font-size:16px;color:#e0e3e1;">top</div>
<svg class="ab" style="left:1106.5px;top:966px;" width="11" height="9" viewBox="0 0 11 9"><path d="M0 0.5h11L5.5 8.5Z" fill="#cdd1cf"/></svg>
<div class="ab" style="left:1131.4px;top:960px;width:1.3px;height:20px;background:#3d5552;"></div>
<svg class="ab" style="left:1143px;top:961px;" width="28" height="18" viewBox="0 0 28 18"><path d="M1.5 9C5 3 9 1.5 14 1.5S23 3 26.5 9C23 15 19 16.5 14 16.5S5 15 1.5 9Z" fill="none" stroke="#d5d9d7" stroke-width="1.7"/><circle cx="14" cy="9" r="3.6" fill="none" stroke="#d5d9d7" stroke-width="1.8"/></svg>
<div class="ab" style="left:1180.9px;top:960px;width:1.3px;height:20px;background:#3d5552;"></div>
<div class="ab" style="left:1191.4px;top:956.6px;width:443.6px;height:25.2px;background:#29403d;border-radius:14px"></div>
<svg class="ab" style="left:1205.5px;top:962.5px;" width="14" height="14" viewBox="0 0 14 14"><path d="M1.4 1.6H12.3L6.85 7.6Z" fill="none" stroke="#cdd2cf" stroke-width="1.6" stroke-linejoin="round"/><path d="M6.85 7.4V13.4" stroke="#cdd2cf" stroke-width="1.7"/></svg>
<div class="ab t dk" style="letter-spacing:0.208px;left:1229.8px;top:960.10px;line-height:22px;font-size:16px;color:#c7ccca;">Filter</div>
<div class="ab t dk" style="letter-spacing:0.289px;left:1650.4px;top:960.10px;line-height:22px;font-size:16px;color:#e0e3e1;">Default levels</div>
<svg class="ab" style="left:1757.5px;top:966px;" width="11" height="9" viewBox="0 0 11 9"><path d="M0 0.5h11L5.5 8.5Z" fill="#cdd1cf"/></svg>
<div class="ab" style="left:1782.4px;top:960px;width:1.3px;height:20px;background:#3d5552;"></div>
<div class="ab t dk" style="letter-spacing:0.146px;left:1800.7px;top:960.10px;line-height:22px;font-size:16px;color:#e0e3e1;">5 Issues:</div>
<svg class="ab" style="left:1876.5px;top:962px;" width="15" height="14" viewBox="0 0 15 14"><path d="M0.5 0.5h14v10h-11l-3 3Z" fill="#f1584a"/><path d="M5.3 3.3l4 4M9.3 3.3l-4 4" stroke="#2a2a2a" stroke-width="1.2"/></svg>
<div class="ab t dk" style="left:1897px;top:960.10px;line-height:22px;font-size:16px;color:#e0e3e1;letter-spacing:0.35px;">1</div>
<svg class="ab" style="left:1912.5px;top:962px;" width="15" height="14" viewBox="0 0 15 14"><path d="M0.5 0.5h14v10h-11l-3 3Z" fill="#5cc4bb"/><path d="M3 3.5h9M3 6h9M3 8.5h6" stroke="#202525" stroke-width="1.1"/></svg>
<div class="ab t dk" style="left:1933px;top:960.10px;line-height:22px;font-size:16px;color:#e0e3e1;letter-spacing:0.35px;">4</div>
<div class="ab" style="left:1956.4px;top:960px;width:1.3px;height:20px;background:#3d5552;"></div>
<svg class="ab" style="left:1970px;top:960px;" width="20" height="20" viewBox="0 0 20 20"><path d="M12.02 1.23 L7.98 1.23 L7.42 3.60 L5.75 4.56 L3.42 3.86 L1.39 7.37 L3.17 9.04 L3.17 10.96 L1.39 12.63 L3.42 16.14 L5.75 15.44 L7.42 16.40 L7.98 18.77 L12.02 18.77 L12.58 16.40 L14.25 15.44 L16.58 16.14 L18.61 12.63 L16.83 10.96 L16.83 9.04 L18.61 7.37 L16.58 3.86 L14.25 4.56 L12.58 3.60Z" fill="none" stroke="#d5d9d7" stroke-width="1.75" stroke-linejoin="round"/><circle cx="10" cy="10" r="3.3" fill="#d5d9d7"/></svg>
<div class="ab" style="left:976.7px;top:987.7px;width:1023.3px;height:40.3px;background:#202525;"></div>
<svg class="ab" style="left:991px;top:999px;" width="10" height="14" viewBox="0 0 10 14"><path d="M2 2l5 5-5 5" fill="none" stroke="#5cc4bb" stroke-width="1.8"/></svg>
</body></html>
